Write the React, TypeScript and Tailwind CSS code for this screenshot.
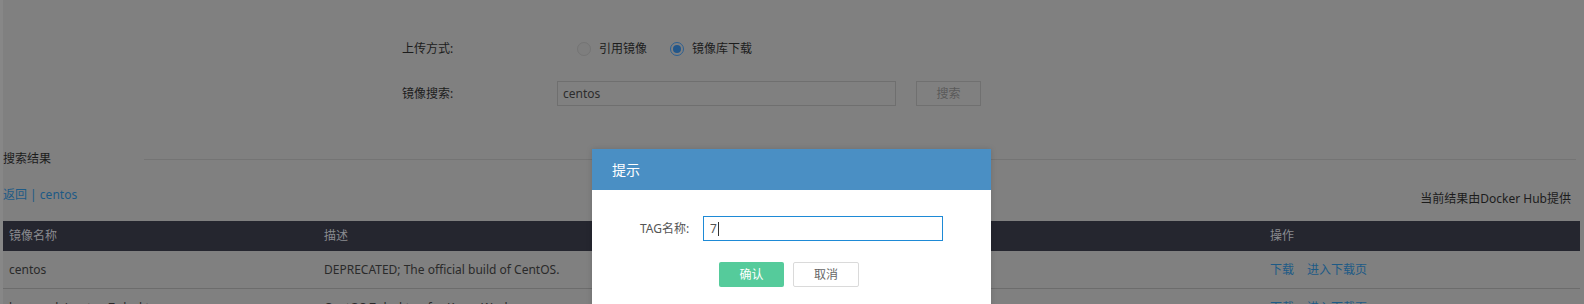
export default function App() {
  const rows = [
    { name: "centos", desc: "DEPRECATED; The official build of CentOS." },
    { name: "kasmweb/centos-7-desktop", desc: "CentOS 7 desktop for Kasm Workspaces" },
  ];
  return (
    <div className="relative w-[1584px] h-[304px] overflow-hidden bg-[#808080] border-l-[3px] border-[#878787] pr-[4px] text-[12px] text-[#1c1c1c] font-['Noto_Sans','Noto_Sans_CJK_SC',sans-serif]">
      {/* form */}
      <div className="pt-[36px] pl-[399px]">
        <div className="flex items-center h-[26px]">
          <div className="w-[155px]">上传方式:</div>
          <div className="flex items-center ml-[20px]">
            <span className="w-[14px] h-[14px] rounded-full border border-[#747474] bg-[#7e7e7e]" />
            <span className="ml-[8px]">引用镜像</span>
            <span className="ml-[23px] w-[14px] h-[14px] rounded-full border border-[#2b5f92] flex items-center justify-center">
              <span className="w-[8px] h-[8px] rounded-full bg-[#23578a]" />
            </span>
            <span className="ml-[8px]">镜像库下载</span>
          </div>
        </div>
        <div className="flex items-center h-[25px] mt-[19px]">
          <div className="w-[155px]">镜像搜索:</div>
          <div className="w-[339px] h-[25px] border border-[#6f6f6f] px-[5px] flex items-center text-[#2c2c2c]">centos</div>
          <div className="ml-[20px] w-[65px] h-[25px] border border-[#707070] flex items-center justify-center text-[#5a5a5a]">搜索</div>
        </div>
      </div>

      {/* results heading */}
      <div className="mt-[44px] flex items-center h-[18px]">
        <span className="w-[141px] leading-[18px]">搜索结果</span>
        <div className="flex-1 h-px bg-[#747474] mr-[4px]" />
      </div>

      <div className="mt-[18px] flex justify-between items-start">
        <span className="leading-[18px] text-[#1d5a86]">返回 | centos</span>
        <span className="pt-[4px] mr-[9px] leading-[18px] text-[#1c1c1c]">当前结果由Docker Hub提供</span>
      </div>

      {/* table */}
      <div className="mt-[13px]">
        <div className="grid grid-cols-[315px_946px_1fr] h-[30px] items-center bg-[#25262f] text-[#8a8b8f]">
          <div className="pl-[6px]">镜像名称</div>
          <div className="pl-[6px]">描述</div>
          <div className="pl-[6px]">操作</div>
        </div>
        {rows.map((r) => (
          <div key={r.name} className="grid grid-cols-[315px_946px_1fr] h-[38px] items-center border-b border-[#6c6c6c] text-[#2a2a2a]">
            <div className="pl-[6px]">{r.name}</div>
            <div className="pl-[6px]">{r.desc}</div>
            <div className="pl-[6px] flex gap-[13px] text-[#1d5a86]">
              <span>下载</span>
              <span>进入下载页</span>
            </div>
          </div>
        ))}
      </div>

      {/* modal */}
      <div className="absolute left-[589px] top-[149px] w-[399px] bg-white shadow-[0_0_6px_rgba(0,0,0,0.15)]">
        <div className="h-[41px] bg-[#4a8fc4] flex items-center pl-[20px] text-white text-[14px]">提示</div>
        <div className="h-[160px] pt-[26px]">
          <div className="flex items-center h-[25px]">
            <span className="ml-[48px] w-[63px] text-[#555]">TAG名称:</span>
            <div className="w-[240px] h-[25px] border border-[#1e8ad6] flex items-center pl-[6px] text-[#555]">
              7<span className="ml-[1px] w-px h-[14px] bg-[#333]" />
            </div>
          </div>
          <div className="flex mt-[21px] pl-[127px] gap-[9px]">
            <div className="w-[65px] h-[25px] bg-[#55cb9b] text-white flex items-center justify-center rounded-[2px]">确认</div>
            <div className="w-[66px] h-[25px] border border-[#dadada] text-[#666] flex items-center justify-center rounded-[2px]">取消</div>
          </div>
        </div>
      </div>
    </div>
  );
}
